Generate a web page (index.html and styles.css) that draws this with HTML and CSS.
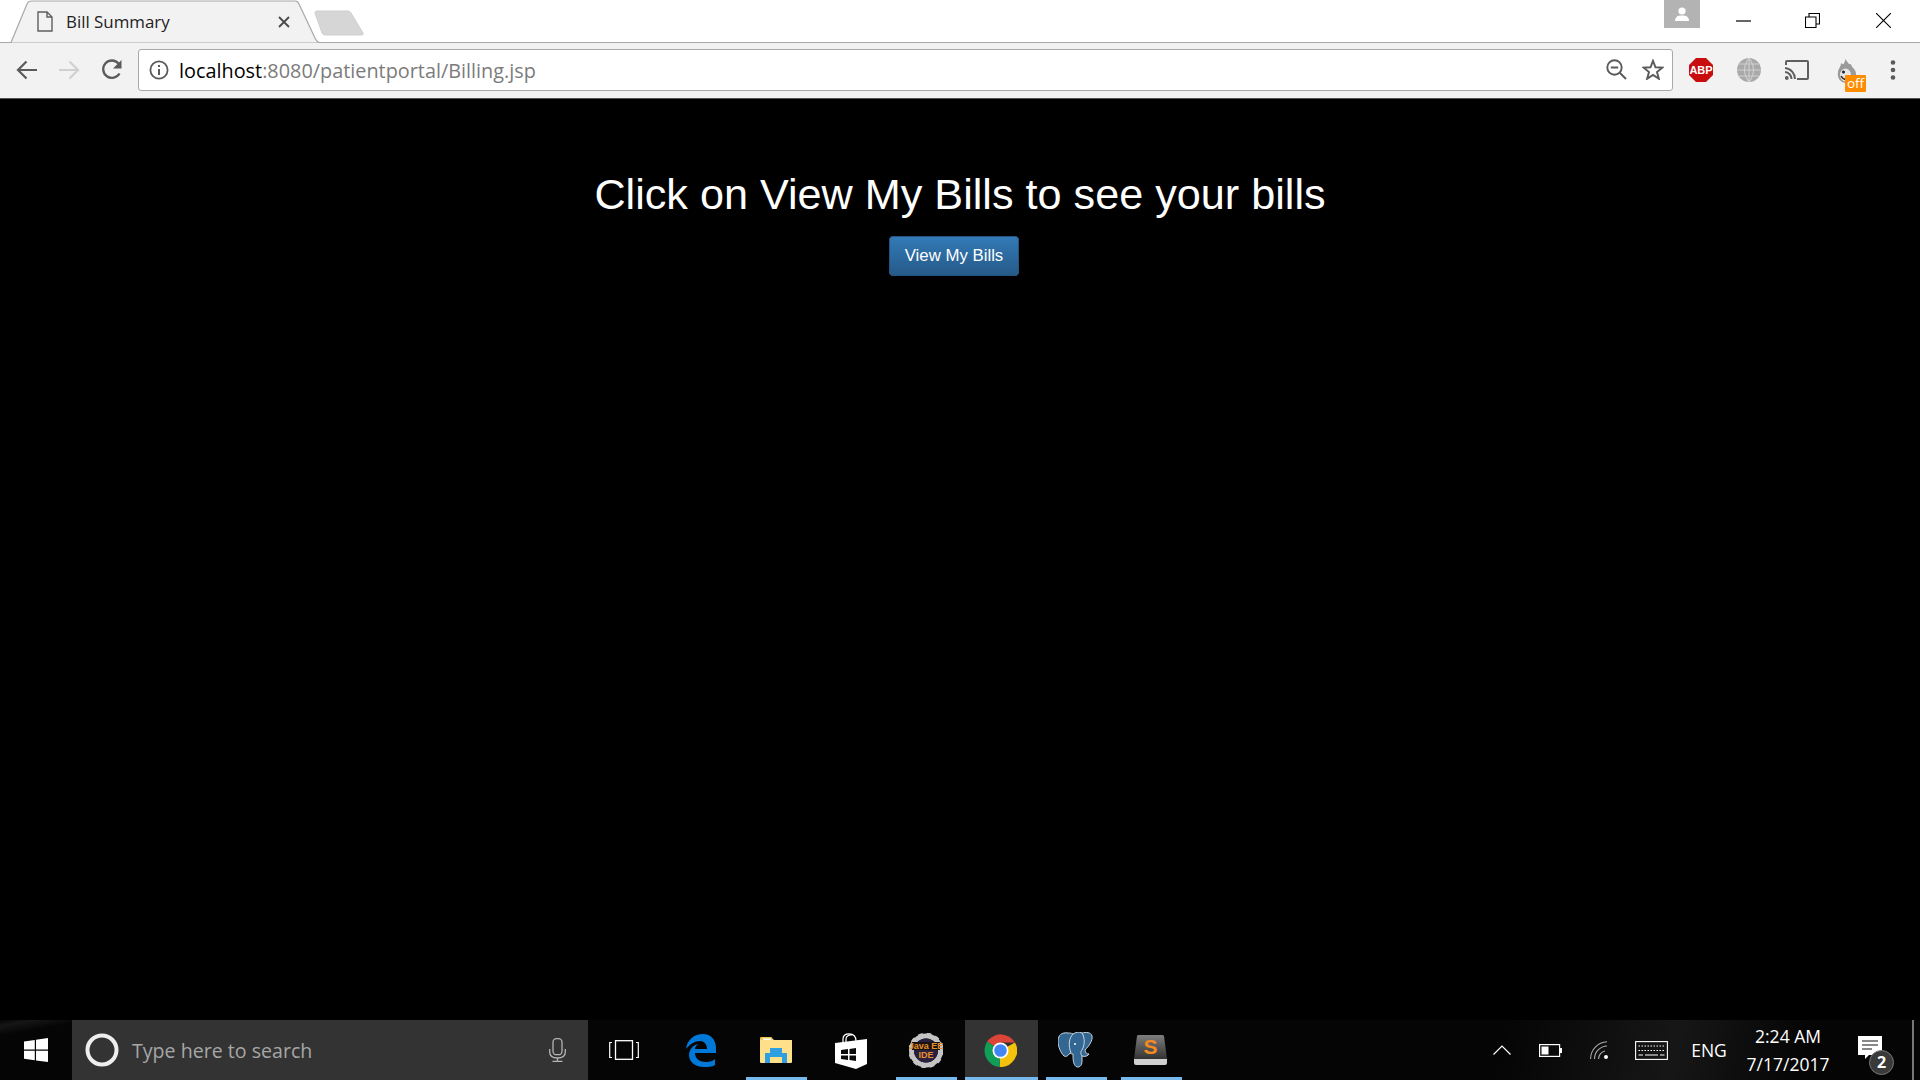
FILE: index.html
```html
<!DOCTYPE html>
<html lang="en">
<head>
    <meta charset="UTF-8">
    <title>Bill Summary</title>
    <link rel="stylesheet" href="styles.css">
</head>
<body>
    <div class="tabstrip">
        <div class="tab">
            <svg class="tab-shape" width="311" height="43" viewBox="0 0 311 43"><path d="M0.5 42.5 H2 L18 4 Q19 1 23 1 H286 Q289 1 290 4 L306 38 Q308 42.5 311 42.5" fill="#f2f2f2" stroke="#a8a8a8" stroke-width="1.2"/></svg>
            <svg class="tab-doc" width="16" height="21" viewBox="0 0 16 21"><path d="M1 1 H10 L15 6 V20 H1 Z M10 1 V6 H15" fill="none" stroke="#5f5f5f" stroke-width="1.4"/></svg>
            <span class="tab-title">Bill Summary</span>
            <svg class="tab-close" width="12" height="12" viewBox="0 0 12 12"><path d="M1 1 L11 11 M11 1 L1 11" stroke="#4a4a4a" stroke-width="1.8"/></svg>
        </div>
        <svg class="newtab" width="50" height="26" viewBox="0 0 50 26"><path d="M1 3 Q1 1 3 1 H34 Q36 1 37 3 L49 23 Q50 25 47 25 H11 Q9 25 8 23 Z" fill="#d6d6d6" stroke="#cfcfcf"/></svg>
        <div class="avatar">
            <svg width="16" height="15" viewBox="0 0 16 15"><circle cx="8" cy="4" r="3.6" fill="#fff"/><path d="M1 14 Q1 9 6 8.5 H10 Q15 9 15 14 Z" fill="#fff"/></svg>
        </div>
        <div class="winctl winctl-min"><svg width="15" height="2" viewBox="0 0 15 2"><path d="M0 1 H15" stroke="#000" stroke-width="1.2"/></svg></div>
        <div class="winctl winctl-max"><svg width="15" height="15" viewBox="0 0 15 15"><path d="M0.5 4 H11 V14.5 H0.5 Z M4 4 V0.5 H14.5 V11 H11" fill="none" stroke="#000" stroke-width="1.1"/></svg></div>
        <div class="winctl winctl-close"><svg width="15" height="15" viewBox="0 0 15 15"><path d="M0 0 L15 15 M15 0 L0 15" stroke="#000" stroke-width="1.1"/></svg></div>
    </div>

    <div class="toolbar">
        <svg class="nav-btn" width="22" height="20" viewBox="0 0 22 20"><path d="M21 10 H2 M10.5 1.5 L2 10 L10.5 18.500" fill="none" stroke="#5a5a5a" stroke-width="2.2"/></svg>
        <svg class="nav-btn" width="22" height="20" viewBox="0 0 22 20"><path d="M1 10 H20 M11.500 1.500 L20 10 L11.500 18.500" fill="none" stroke="#d0d0d0" stroke-width="2.200"/></svg>
        <svg class="nav-btn nav-reload" width="22" height="22" viewBox="0 0 22 22"><path d="M18.500 14.500 A8.700 8.700 0 1 1 17.500 4.500" fill="none" stroke="#5a5a5a" stroke-width="2.300"/><path d="M20.500 1 V9.500 H12 Z" fill="#5a5a5a"/></svg>

        <div class="omnibox">
            <svg class="info" width="20" height="20" viewBox="0 0 20 20"><circle cx="10" cy="10" r="8.600" fill="none" stroke="#5a5a5a" stroke-width="1.800"/><path d="M10 9 V15 M10 5 V7" stroke="#5a5a5a" stroke-width="2"/></svg>
            <span class="url"><span class="url-host">localhost</span>:8080/patientportal/Billing.jsp</span>
            <svg class="omni-zoom" width="21" height="21" viewBox="0 0 21 21"><circle cx="8.500" cy="8.500" r="7.200" fill="none" stroke="#5a5a5a" stroke-width="1.900"/><path d="M13.500 13.500 L20 20 M4.800 8.500 H12.200" stroke="#5a5a5a" stroke-width="1.900"/></svg>
            <svg class="omni-star" width="22" height="21" viewBox="0 0 22 21"><path d="M11 1.800 L13.500 8.300 L20.500 8.600 L15 13 L16.900 19.800 L11 16 L5.100 19.800 L7 13 L1.500 8.600 L8.500 8.300 Z" fill="none" stroke="#5a5a5a" stroke-width="1.900"/></svg>
        </div>

        <svg class="ext ext-abp" width="24" height="24" viewBox="0 0 24 24"><path d="M7 0 H17 L24 7 V17 L17 24 H7 L0 17 V7 Z" fill="#c70d0d"/><text x="12" y="16" class="abp-text">ABP</text></svg>
        <svg class="ext ext-globe" width="24" height="24" viewBox="0 0 24 24"><circle cx="12" cy="12" r="12" fill="#a9a9a9"/><path d="M12 0 V24 M0 12 H24 M2 6 H22 M2 18 H22 M12 0 Q3 12 12 24 M12 0 Q21 12 12 24" fill="none" stroke="#cfcfcf" stroke-width="1.100"/></svg>
        <svg class="ext ext-cast" width="24" height="20" viewBox="0 0 24 20"><path d="M1 5 V2 Q1 1 2 1 H22 Q23 1 23 2 V18 Q23 19 22 19 H12" fill="none" stroke="#5f5f5f" stroke-width="2"/><path d="M0 8 A11 11 0 0 1 10 19 M0 12 A7 7 0 0 1 6.500 19" fill="none" stroke="#5f5f5f" stroke-width="2"/><circle cx="1.800" cy="18" r="1.900" fill="#5f5f5f"/></svg>
        <div class="ext ext-hola">
            <svg class="hola-flame" width="20" height="24" viewBox="0 0 20 24"><path d="M10 24 C3 24 0 19 1 13 C1.500 9 3.500 9 4 4 C6 6 7 6 8.500 0 C11 4 12 6 14 5 C14 8 19 10 19 15 C19 21 15 24 10 24 Z" fill="#9a9a9a"/><ellipse cx="8.500" cy="16" rx="5.500" ry="6.500" fill="#e6e6e6"/><circle cx="6.500" cy="13" r="1.500" fill="#222"/><path d="M4 17 Q7 22 12 20" fill="none" stroke="#222" stroke-width="1.300"/></svg>
            <span class="hola-off">off</span>
        </div>
        <svg class="ext-menu" width="6" height="22" viewBox="0 0 6 22"><circle cx="3" cy="3.500" r="2.300" fill="#5a5a5a"/><circle cx="3" cy="11" r="2.300" fill="#5a5a5a"/><circle cx="3" cy="18.500" r="2.300" fill="#5a5a5a"/></svg>
    </div>

    <main class="page">
        <h1 class="page-title">Click on View My Bills to see your bills</h1>
        <button type="button" class="btn-bills">View My Bills</button>
    </main>

    <footer class="taskbar">
        <div class="start">
            <svg width="24" height="24" viewBox="0 0 24 24"><path d="M0 3.400 L10.800 1.900 V11.500 H0 Z M12 1.700 L24 0 V11.500 H12 Z M0 12.700 H10.800 V22.300 L0 20.800 Z M12 12.700 H24 V24 L12 22.500 Z" fill="#fff"/></svg>
        </div>
        <div class="search">
            <svg class="cortana" width="34" height="34" viewBox="0 0 34 34"><circle cx="17" cy="17" r="14.500" fill="none" stroke="#eee" stroke-width="4"/></svg>
            <span class="search-text">Type here to search</span>
            <svg class="mic" width="17" height="24" viewBox="0 0 17 24"><rect x="4" y="0.700" width="9" height="16" rx="3.500" fill="none" stroke="#b5b5b5" stroke-width="1.300"/><path d="M0.700 11 V14 Q0.700 20 8.500 20 Q16.300 20 16.300 14 V11 M8.500 20 V23.300 M3.500 23.300 H13.500" fill="none" stroke="#b5b5b5" stroke-width="1.300"/></svg>
        </div>
        <div class="task task-view">
            <svg width="30" height="20" viewBox="0 0 30 20"><rect x="6.500" y="0.700" width="17" height="18.600" fill="none" stroke="#fff" stroke-width="1.300"/><path d="M3 2.500 H0.700 V17.500 H3 M27 2.500 H29.300 V17.500 H27" fill="none" stroke="#fff" stroke-width="1.200"/></svg>
        </div>
        <div class="task">
            <svg width="30" height="33" viewBox="0 0 30 33"><path d="M0 15 C1 6 8 0 17 0 C25 0 30 6 30 14 V19 H9 C9 25 14 28 20 28 C24 28 27 27 29 25 V31 C26 33 22 33 18 33 C8 33 3 27 3 21 C3 16 7 11 12 10 C10 12 9 13 9 15 H21 C21 10 18 7 14 7 C9 7 4 10 0 15 Z" fill="#0078d7"/></svg>
        </div>
        <div class="task task-open">
            <svg width="32" height="26" viewBox="0 0 32 26"><path d="M0 2 Q0 0 2 0 H11 L14 3 H32 V25 Q32 26 31 26 H1 Q0 26 0 25 Z" fill="#ffe08a"/><path d="M0 2 Q0 0 2 0 H11 L13 3 H0 Z" fill="#f2c94c"/><rect x="3" y="1.500" width="8" height="1.500" fill="#fff"/><path d="M5 26 V16 H10 V11 H22 V16 H27 V26 H22 V20 H10 V26 Z" fill="#2f9fe0"/></svg>
        </div>
        <div class="task">
            <svg class="store" width="32" height="36" viewBox="0 0 32 36"><path d="M0 10 L32 6 V31 L21 36 L0 30 Z" fill="#fff"/><path d="M8 10 V6 C8 2 11 0.800 14 0.800 C18 0.800 21 3 21 8 M11 9.500 V6 C11 3 14 1.500 17 2" fill="none" stroke="#fff" stroke-width="1.200"/><path d="M6 17 L13 16 V21 H6 Z M14.500 16 L21 15 V21 H14.500 Z M6 22.500 H13 V27 L6 26 Z M14.500 22.500 H21 V28 L14.500 27 Z" fill="#0a0a0a"/></svg>
        </div>
        <div class="task task-open">
            <svg width="34" height="35" viewBox="0 0 34 35"><circle cx="17" cy="17.500" r="14.500" fill="none" stroke="#c4c4c4" stroke-width="5"/><circle cx="17" cy="17.500" r="16" fill="none" stroke="#c4c4c4" stroke-width="3.500" stroke-dasharray="4.500 3.900"/><circle cx="17" cy="17.500" r="12" fill="#2a1f3f"/><rect x="3" y="9" width="28" height="8" fill="#1a1410"/><text x="17" y="15.500" class="gear-text">Java EE</text><text x="17" y="24.500" class="gear-text">IDE</text></svg>
        </div>
        <div class="task task-active">
            <svg width="33" height="33" viewBox="0 0 33 33"><path d="M16.500 16.500 L3.200 7.500 A16.500 16.500 0 0 1 31 8.500 H16.500 Z" fill="#db4437"/><path d="M16.500 16.500 L31 8.500 A16.500 16.500 0 0 1 15.500 33 Z" fill="#f4c20d"/><path d="M16.500 16.500 L15.500 33 A16.500 16.500 0 0 1 3.200 7.500 Z" fill="#0f9d58"/><circle cx="16.500" cy="16.500" r="8" fill="#fff"/><circle cx="16.500" cy="16.500" r="6.300" fill="#4285f4"/></svg>
        </div>
        <div class="task task-open">
            <svg width="35" height="36" viewBox="0 0 35 36"><path d="M10 1 C4 0 0 3 0 9 C0 15 3 21 6 24 C8 25 10 24 12 21 C13 22 14 22 15 22 C15 27 15 32 18 34.500 C21 36 24 34 24 29 L24 24 C27 25 30 24 31 22 C29 22 27 21 27 18 C31 14 35 8 34 4 C33 0 28 0 24 1 C21 -0.500 18 0 15 2 C13 1 12 1 10 1 Z" fill="#336791" stroke="#c9d6e0" stroke-width="1"/><path d="M15 2 C11 6 10 13 13 21 M24 1 C27 6 27 13 24 18 C22 20 23 23 24 24" fill="none" stroke="#c9d6e0" stroke-width="1"/><circle cx="17" cy="12" r="1" fill="#fff"/></svg>
        </div>
        <div class="task task-open">
            <svg width="33" height="30" viewBox="0 0 33 30"><defs><linearGradient id="sublimeBox" x1="0" y1="0" x2="0" y2="1"><stop offset="0" stop-color="#7d7d7d"/><stop offset="1" stop-color="#333"/></linearGradient></defs><path d="M3 1 Q3 0 5 0 H28 Q30 0 30 1 L33 24 H0 Z" fill="url(#sublimeBox)"/><path d="M0 24 H33 V28 Q33 30 31 30 H2 Q0 30 0 28 Z" fill="#d0d0d0"/><text x="16.500" y="19" class="sublime-text">S</text></svg>
        </div>

        <div class="tray">
            <div class="tray-item tray-chevron"><svg width="18" height="10" viewBox="0 0 18 10"><path d="M0.500 9.500 L9 1 L17.500 9.500" fill="none" stroke="#fff" stroke-width="1.200"/></svg></div>
            <div class="tray-item tray-battery"><svg width="23" height="13" viewBox="0 0 23 13"><rect x="0.600" y="0.600" width="20" height="11.800" fill="none" stroke="#fff" stroke-width="1.200"/><rect x="2.500" y="2.500" width="7" height="8" fill="#fff"/><rect x="21" y="4" width="2" height="5" fill="#fff"/></svg></div>
            <div class="tray-item tray-wifi"><svg width="18" height="18" viewBox="0 0 18 18"><path d="M0.600 18 A17 17 0 0 1 17 0.800 M4.500 18 A13 13 0 0 1 17 5 M8.500 18 A9 9 0 0 1 15 10" fill="none" stroke="#aaa" stroke-width="1.100"/><circle cx="16" cy="16" r="2" fill="#fff"/></svg></div>
            <div class="tray-item tray-keys"><svg width="33" height="19" viewBox="0 0 33 19"><rect x="0.600" y="0.600" width="31.800" height="17.800" fill="none" stroke="#fff" stroke-width="1.100"/><path d="M3.500 5 H29.500 M3.500 9.500 H29.500" stroke="#fff" stroke-dasharray="1.500 1.500"/><path d="M3.500 14 H8 M10 14 H23 M25 14 H29.500" stroke="#fff"/></svg></div>
            <div class="tray-item tray-lang">ENG</div>
            <div class="tray-item tray-clock"><span>2:24 AM</span><span>7/17/2017</span></div>
            <div class="tray-item tray-notif">
                <svg width="24" height="23" viewBox="0 0 24 23"><path d="M0 0 H24 V19 H11 L7 23 V19 H0 Z" fill="#fff"/><path d="M4 5 H20 M4 9 H20 M4 13 H14" stroke="#111" stroke-width="1.100"/></svg>
                <span class="notif-badge">2</span>
            </div>
            <div class="tray-peek"></div>
        </div>
    </footer>
</body>
</html>
```

FILE: styles.css
```css
* {
    box-sizing: border-box;
}

html, body {
    margin: 0;
    height: 100%;
}

body {
    display: flex;
    flex-direction: column;
    height: 1080px;
    overflow: hidden;
    font-family: 'Open Sans', 'Noto Sans', sans-serif;
    background-color: #000;
}

/* browser chrome */
.tabstrip {
    display: flex;
    align-items: flex-start;
    height: 43px;
    flex-shrink: 0;
    background-color: #fff;
    border-bottom: 1px solid #a8a8a8;
}

.tab {
    position: relative;
    display: flex;
    align-items: center;
    width: 311px;
    height: 43px;
    margin-left: 9px;
}

.tab-shape {
    position: absolute;
    left: 0;
    top: 0;
}

.tab-doc {
    position: relative;
    margin-left: 28px;
}

.tab-title {
    position: relative;
    width: 207px;
    margin-left: 13px;
    font-size: 16.900px;
    color: #222;
}

.tab-close {
    position: relative;
    margin-left: 5px;
}

.newtab {
    margin: 10px 0 0 -6px;
}

.avatar {
    display: flex;
    align-items: center;
    justify-content: center;
    width: 36px;
    height: 28px;
    margin-left: 1300px;
    background-color: #b3b3b3;
}

.winctl {
    display: flex;
    align-items: center;
    justify-content: center;
    height: 15px;
    margin-top: 13px;
}

.winctl-min {
    margin-left: 36px;
}

.winctl-max {
    margin-left: 54px;
}

.winctl-close {
    margin-left: 56px;
}

.toolbar {
    display: flex;
    align-items: center;
    height: 56px;
    flex-shrink: 0;
    padding: 0 0 2px 16px;
    background-color: #f2f2f2;
    border-bottom: 1px solid #555;
}

.nav-btn {
    margin-right: 20px;
}

.nav-reload {
    margin: 0 19px 0 1px;
}

.omnibox {
    display: flex;
    align-items: center;
    width: 1535px;
    height: 42px;
    margin-left: -4px;
    padding-left: 10px;
    background-color: #fff;
    border: 1px solid #a9a9a9;
    border-radius: 3px;
}

.url {
    flex: 1;
    margin-left: 10px;
    padding-top: 1px;
    font-size: 19.850px;
    color: #7b7b7b;
    white-space: nowrap;
}

.url-host {
    color: #000;
}

.omni-star {
    margin: 0 8px 0 15px;
}

.ext-abp {
    margin-left: 16px;
}

.ext-globe {
    margin-left: 24px;
}

.ext-cast {
    margin-left: 24px;
}

.ext-hola {
    position: relative;
    width: 30px;
    height: 33px;
    margin: 16px 0 0 27px;
    align-self: flex-start;
}

.hola-flame {
    display: block;
    margin-left: 1px;
}

.hola-off {
    position: absolute;
    right: 0;
    bottom: 0;
    width: 21px;
    height: 17px;
    background-color: #ff8c00;
    border-radius: 1px;
    font-size: 13.500px;
    line-height: 16px;
    text-align: center;
    color: #fff;
}

.ext-menu {
    margin-left: 24px;
}

.abp-text {
    font-family: 'Liberation Sans', sans-serif;
    font-size: 11px;
    font-weight: bold;
    text-anchor: middle;
    fill: #fff;
}

/* page content */
.page {
    flex: 1;
    display: flex;
    flex-direction: column;
    align-items: center;
    background-color: #000;
}

.page-title {
    margin: 68px 0 0;
    font-family: 'Liberation Sans', sans-serif;
    font-size: 43.200px;
    font-weight: normal;
    line-height: 55px;
    color: #fff;
}

.btn-bills {
    width: 130px;
    height: 40px;
    margin: 14px 12px 0 0;
    padding: 0 0 1px;
    font-family: 'Liberation Sans', sans-serif;
    font-size: 16.800px;
    color: #fff;
    background-image: linear-gradient(to bottom, #337ab7, #265a88);
    border: 1px solid #245580;
    border-radius: 4px;
}

/* windows taskbar */
.taskbar {
    display: flex;
    align-items: stretch;
    height: 60px;
    flex-shrink: 0;
    background-color: #050505;
    background-image:
        linear-gradient(170deg, transparent 0, rgba(255, 255, 255, 0.07) 1.500%, transparent 4%),
        linear-gradient(100deg, transparent 78%, rgba(255, 255, 255, 0.07) 87%, transparent 94%);
    color: #fff;
}

.start {
    display: flex;
    align-items: center;
    justify-content: center;
    width: 72px;
}

.search {
    display: flex;
    align-items: center;
    width: 516px;
    padding-left: 13px;
    background-color: #333;
}

.search-text {
    width: 417px;
    margin-left: 13px;
    font-size: 19.600px;
    color: #a6a6a6;
}

.task {
    position: relative;
    display: flex;
    align-items: center;
    justify-content: center;
    width: 73px;
    margin-right: 2px;
}

.task svg {
    margin-right: 2px;
}

.task-view {
    width: 75px;
    margin-right: 2px;
}

.task-view svg {
    margin-right: 4px;
}

.task .store {
    margin-right: 1px;
    margin-top: 2px;
}

.task-open::after {
    content: "";
    position: absolute;
    left: 6px;
    right: 6px;
    bottom: 0;
    height: 3px;
    background-color: #76b9ed;
}

.task-active {
    background-color: #333;
    box-shadow: inset 0 -3px 0 #76b9ed;
}

.gear-text {
    font-family: 'Liberation Sans', sans-serif;
    font-size: 9px;
    font-weight: bold;
    text-anchor: middle;
    fill: #e8902a;
}

.sublime-text {
    font-family: 'Liberation Sans', sans-serif;
    font-size: 21px;
    font-weight: bold;
    text-anchor: middle;
    fill: #f58a1f;
}

.tray {
    display: flex;
    align-items: stretch;
    margin-left: auto;
}

.tray-item {
    display: flex;
    align-items: center;
    justify-content: center;
}

.tray-chevron, .tray-battery {
    width: 48px;
}

.tray-wifi {
    width: 50px;
}

.tray-keys {
    width: 54px;
}

.tray-lang {
    width: 62px;
    font-size: 17.500px;
}

.tray-clock {
    flex-direction: column;
    width: 96px;
    font-size: 17.500px;
    line-height: 28px;
    text-align: center;
}

.tray-notif {
    position: relative;
    width: 76px;
    padding: 0 8px 5px 0;
}

.notif-badge {
    position: absolute;
    left: 33px;
    top: 30px;
    width: 25px;
    height: 25px;
    font-size: 16px;
    font-weight: bold;
    line-height: 23px;
    text-align: center;
    background-color: #3a3a3a;
    border: 1px solid #777;
    border-radius: 50%;
}

.tray-peek {
    width: 2px;
    margin-right: 6px;
    background-color: #777;
}
```
